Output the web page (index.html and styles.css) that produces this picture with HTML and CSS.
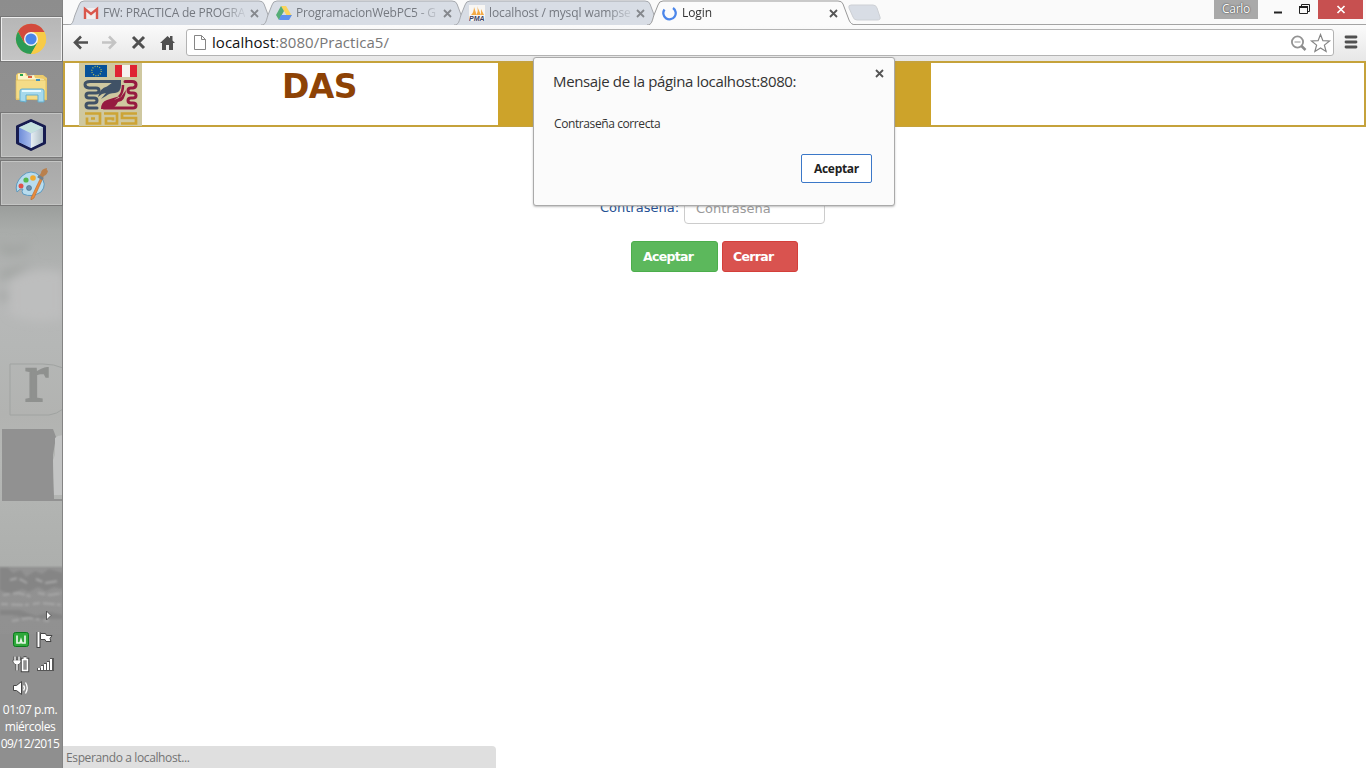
FILE: index.html
```html
<!DOCTYPE html>
<html lang="es">
<head>
<meta charset="utf-8">
<title>Login</title>
<link rel="stylesheet" href="styles.css">
</head>
<body>
<div class="desktop">
  <aside class="taskbar">
    <svg class="wallpaper" width="63" height="768" viewBox="0 0 63 768">
      <defs>
        <linearGradient id="sky" x1="0" y1="0" x2="0" y2="1">
          <stop offset="0" stop-color="#8d8d8d"/><stop offset=".18" stop-color="#929292"/><stop offset=".27" stop-color="#9c9f9d"/><stop offset=".3" stop-color="#a9acaa"/><stop offset=".39" stop-color="#b7b8b8"/><stop offset=".45" stop-color="#b5b7b6"/><stop offset=".54" stop-color="#b2b3b1"/><stop offset=".6" stop-color="#b5b7b5"/><stop offset=".736" stop-color="#adafad"/><stop offset=".74" stop-color="#929292"/><stop offset="1" stop-color="#8e8e8e"/>
        </linearGradient>
        <filter id="soft" x="-50%" y="-50%" width="200%" height="200%"><feGaussianBlur stdDeviation="5"/></filter>
        <filter id="slight"><feGaussianBlur stdDeviation=".8"/></filter>
      </defs>
      <rect width="63" height="768" fill="url(#sky)"/>
      <g filter="url(#soft)"><path d="M0 241q14 10 28 0v9q-16 9-28 2zM0 271q18-4 34-9l-18 13-16 6zM0 290q9 2 8 8l-8 6z" fill="#a2a5a3"/><path d="M10 280q25-15 53-7v45q-28 8-53-4z" fill="#bdbebe"/></g>
      <path d="M63 368q-9-4-20-4H10v51h39q8-1 14-6" fill="none" stroke="#a0a3a1"/>
      <text class="wall-letter" x="25" y="401">r</text>
      <path d="M2 429h51l3 8-3 18 1 44h9v2H2z" fill="#919191"/><path d="M55 438l3-2 5-1v60h-9l-1-35 2-5z" fill="#c3c4c4"/>
      <g filter="url(#slight)" fill="#858585"><path d="M0 568h8l5 5 8-3 5 7 9-6 7 3 7-5 14 4v16l-9-2-8 4-8-4-9 5-7-3-12 5-10-4z"/><path d="M0 610h20l16 6 14-4 13 3v4H32L12 615H0z"/></g>
      <g filter="url(#slight)" stroke="#a7a7a7" fill="none"><path stroke-width="2" stroke-dasharray="7 3 12 2 4 4" d="M10 580l8-2 9 5M36 579l9 4 13-2M3 595l16-2 13 4M38 593l12 2 13-2M1 604l24 1 15-2 23 2M12 621l17-3 20 3"/></g>
      <path d="M0 634h63v134H0z" fill="#8f8f8f"/>
      <path d="M62.500 0v768" stroke="#848484"/>
    </svg>
    <div class="task task-active">
      <svg width="32" height="32" viewBox="0 0 32 32"><circle cx="16" cy="16" r="15" fill="#f6c945"/><path d="M3 8.500A15 15 0 0 1 29.500 9H16L9.500 20z" fill="#d34a3d"/><path d="M3 8.500A15 15 0 0 0 16 31l6.500-11H9.500z" fill="#2c9b56"/><path d="M29.500 9A15 15 0 0 1 16 31l6.500-11.500L20 9z" fill="#f7cb48"/><circle cx="16" cy="16" r="7" fill="#f3f3f3"/><circle cx="16" cy="16" r="5.600" fill="#4a86ea"/></svg>
    </div>
    <div class="task task-plain">
      <svg width="34" height="34" viewBox="0 0 34 34"><path d="M2 5l2-2h8l2 3h5l1-1h9l4 3v22H2z" fill="#eccb6b"/><path d="M4 4l7-1 1 3 8-1 1 3 9 1v5H4z" fill="#fcf4c8"/><path d="M2 10h30v20l-30-1z" fill="#f4dc87" stroke="#d8b85d" stroke-width=".7"/><path d="M6 4h3v2H6z" fill="#26a44a"/><path d="M14 6h4v2h-4z" fill="#db6040"/><path d="M22 9h4v2h-4z" fill="#3d91bf"/><path d="M6 31V21q0-2 2-2h20q2 0 2 2v11h-6v-7H12v7z" fill="#a6d9ec" stroke="#64aecd"/><path d="M8 21h19" stroke="#e7faff" stroke-width="2"/></svg>
    </div>
    <div class="task">
      <svg width="32" height="34" viewBox="0 0 32 34"><defs><linearGradient id="cl"><stop stop-color="#6e8cd8"/><stop offset="1" stop-color="#a9bdec"/></linearGradient><linearGradient id="cr"><stop stop-color="#e6eef4"/><stop offset="1" stop-color="#adbcc4"/></linearGradient></defs><path d="M16 2.500L29.500 8.500v16.500L16 31.500 2.500 25V8.500z" fill="#a3b7e1" stroke="#171c50" stroke-width="3" stroke-linejoin="round"/><path d="M4 9.500l12-5.500 12 5.500-12 6z" fill="#c5e2df"/><path d="M4 9.500l12 6V30L4 24z" fill="url(#cl)"/><path d="M28 9.500l-12 6V30l12-6z" fill="url(#cr)"/></svg>
    </div>
    <div class="task">
      <svg width="34" height="34" viewBox="0 0 34 34"><path d="M8 10Q17 2 26 10q8 8 1 16-9 6-18 2-2-3 0-5-3-1-6 3-3-8 5-16z" fill="#b8dcee" stroke="#5f9abf"/><circle cx="7" cy="20" r="2.500" fill="#df5049"/><circle cx="12" cy="14" r="2.600" fill="#55b750"/><circle cx="19" cy="12" r="2.800" fill="#efaa31"/><circle cx="15" cy="22" r="2.500" fill="#708fa9" stroke="#38698c" stroke-width=".6"/><path d="M17 32l10-21 2 1-9 20-3 2z" fill="#e88c3d" stroke="#b9682d" stroke-width=".6"/><path d="M25 10l2-3q0-4 6-5-1 2 1 3-1 4-4 5l-2 3z" fill="#b9804d"/><path d="M24 10l5 3" stroke="#72818c" stroke-width="3"/></svg>
    </div>
    <div class="tray">
      <svg width="63" height="94" viewBox="0 0 63 94"><path d="M46.500 6v9l4.500-4.500z" fill="#fff" stroke="#555"/><rect x="13.500" y="27.500" width="15" height="14" rx="2" fill="#2fa83a" stroke="#087a1c"/><path d="M17 30.500v7.500h3l1-3 1 3h3v-7.500" fill="none" stroke="#e8f7e8" stroke-width="1.700"/><path d="M38.500 27v16" stroke="#444" stroke-width="4"/><path d="M38.500 27v15" stroke="#fff" stroke-width="2"/><path d="M40.500 28.500h5l1 2h5.500l-2 3 1 3h-5l-1-2h-4.500z" fill="#fff" stroke="#444"/><g fill="none"><path d="M15 51.500v4m4-4v4M17 58v7.500" stroke="#444" stroke-width="3"/><path d="M13 55h8v2l-2 2.500h-4L13 57z" fill="#fff" stroke="#444" stroke-width=".7"/><path d="M15 51.500v4m4-4v4M17 58v7.500" stroke="#fff" stroke-width="1.400"/><path d="M22.500 54.500h5v11h-5zM23.500 53h3" stroke="#444" stroke-width="3.500"/><path d="M22.500 54.500h5v11h-5zM23.500 53h3" fill="#8f8f8f" stroke="#fff" stroke-width="1.500"/></g><path d="M37 66h17V53h-4v3h-3v2h-3v2h-3v3h-4z" fill="#555"/><path d="M39 65v-2m3 2v-4m3 4v-6m3 6v-8m3 8V54" stroke="#fff" stroke-width="2"/><path d="M13.500 80.500h3l5-4v13l-5-4h-3z" fill="#fff" stroke="#444"/><path d="M23.500 80.500q2 2.500 0 5m2-8q3.500 5.500 0 11" fill="none" stroke="#fff" stroke-width="1.300"/></svg>
      <div class="clock"><span>01:07 p.m.</span><span>miércoles</span><span class="date">09/12/2015</span></div>
    </div>
  </aside>

  <div class="browser">
    <div class="tabstrip">
      <div class="tab">
        <svg class="tab-shape" width="209" height="25" viewBox="0 0 209 25"><path d="M0 25C5 25 5 21 7 15L11 5Q12 1 16 1H191Q195 1 196 4L202 20Q204 25 209 25" fill="#d8dde5" stroke="#a6a9ae"/></svg>
        <svg class="fav" width="16" height="16" viewBox="0 0 16 16"><path d="M1 3h14v11H1z" fill="#f0eeee"/><path d="M2 14V4l6 5 6-5v10" fill="none" stroke="#d9574c" stroke-width="2.400"/></svg>
        <span class="tab-title t1">FW: PRACTICA de PROGRA</span>
        <svg class="x" width="9" height="9" viewBox="0 0 9 9"><path d="M1 1l7 7m0-7L1 8"/></svg>
      </div>
      <div class="tab">
        <svg class="tab-shape" width="209" height="25" viewBox="0 0 209 25"><path d="M0 25C5 25 5 21 7 15L11 5Q12 1 16 1H191Q195 1 196 4L202 20Q204 25 209 25" fill="#d8dde5" stroke="#a6a9ae"/></svg>
        <svg class="fav" width="16" height="16" viewBox="0 0 16 16"><path d="M5 1h5l6 10h-5z" fill="#fbd45b"/><path d="M5 1l3 5-5 9-3-5z" fill="#55ad77"/><path d="M5 10h11l-3 5H3z" fill="#5e91ed"/></svg>
        <span class="tab-title t2">ProgramacionWebPC5 - G</span>
        <svg class="x" width="9" height="9" viewBox="0 0 9 9"><path d="M1 1l7 7m0-7L1 8"/></svg>
      </div>
      <div class="tab">
        <svg class="tab-shape" width="209" height="25" viewBox="0 0 209 25"><path d="M0 25C5 25 5 21 7 15L11 5Q12 1 16 1H191Q195 1 196 4L202 20Q204 25 209 25" fill="#d8dde5" stroke="#a6a9ae"/></svg>
        <svg class="fav" width="16" height="16" viewBox="0 0 16 16"><path d="M0 0h16v16H0z" fill="#f8f6f3"/><path d="M2 10Q5 7 5 2l2 6v2zM7 10q3-4 1-9l4 9zM12 10V4l3 6z" fill="#f4aa45"/><text class="pma" x="0" y="16">PMA</text></svg>
        <span class="tab-title t3">localhost / mysql wampse</span>
        <svg class="x" width="9" height="9" viewBox="0 0 9 9"><path d="M1 1l7 7m0-7L1 8"/></svg>
      </div>
      <div class="tab tab-current">
        <svg class="tab-shape" width="209" height="25" viewBox="0 0 209 25"><path d="M0 25C5 25 5 21 7 15L11 5Q12 1 16 1H191Q195 1 196 4L202 20Q204 25 209 25" fill="#fbfbfb" stroke="#999"/></svg>
        <svg class="fav" width="16" height="16" viewBox="0 0 16 16"><path d="M2.500 4.500A6.200 6.200 0 1 0 11 3" fill="none" stroke="#4b86ea" stroke-width="2.300"/></svg>
        <span class="tab-title t4">Login</span>
        <svg class="x" width="9" height="9" viewBox="0 0 9 9"><path d="M1 1l7 7m0-7L1 8"/></svg>
      </div>
      <svg class="newtab" width="34" height="18" viewBox="0 0 34 18"><path d="M3 1h22q3 0 4 3l3 9q1 3-3 3H9q-3 0-4-3L1 4q-1-3 2-3z" fill="#d8dde5" stroke="#cdd0d5"/></svg>
      <div class="window-controls">
        <span class="profile">Carlo</span>
        <svg width="105" height="19" viewBox="0 0 105 19"><path d="M16 12.500h8" stroke="#222" stroke-width="2"/><path d="M41.500 6.500h8v7h-8zM43.500 6V4.500h8v7H50" fill="none" stroke="#222"/><path d="M41 7h9" stroke="#222" stroke-width="2"/><path d="M60 0h45v19H60z" fill="#c75050"/><path d="M79.500 6l7 7m0-7l-7 7" stroke="#fff" stroke-width="1.700"/></svg>
      </div>
    </div>

    <div class="toolbar">
      <svg class="nav" width="116" height="36" viewBox="0 0 116 36"><g fill="none" stroke-width="2.600"><path d="M25 17.500H12m6-6l-6 6 6 6" stroke="#505050"/><path d="M39 17.500h13m-6-6l6 6-6 6" stroke="#c4c4c4"/><path d="M70 12l11 11m0-11L70 23" stroke="#505050" stroke-width="3"/></g><path d="M97 18l7.500-7 2.500 2.300V11h2.500v4.600L112 18h-2v7h-4v-5h-3v5h-4v-7z" fill="#505050"/></svg>
      <div class="omnibox">
        <svg width="12" height="15" viewBox="0 0 12 15"><path d="M.5.5h7l4 4v10H.5zM7.500.5v4h4" fill="#fff" stroke="#858585"/></svg>
        <span class="url">localhost<span>:8080/Practica5/</span></span>
        <svg class="omni-icons" width="42" height="20" viewBox="0 0 42 20"><circle cx="7.500" cy="9" r="5.600" fill="none" stroke="#939393" stroke-width="1.800"/><path d="M4.500 9h6" stroke="#939393"/><path d="M11.500 13l4 4" stroke="#8b8b8b" stroke-width="2.500"/><path d="M30.500 1.500l2.400 6.200 6.600.3-5.100 4.100 1.700 6.400-5.600-3.600-5.600 3.600 1.700-6.400-5.100-4.100 6.600-.3z" fill="#fff" stroke="#858585" stroke-width="1.200"/></svg>
      </div>
      <svg class="menu" width="14" height="14" viewBox="0 0 14 14"><path d="M2 2h10M2 7h10M2 12h10" stroke="#505050" stroke-width="2.800" stroke-linecap="round"/></svg>
    </div>

    <main class="page">
      <header class="banner">
        <div class="banner-cell brand">
          <svg width="63" height="63" viewBox="0 0 63 63"><path d="M0 0h63v63H0z" fill="#cfc8a0"/><path d="M6 2h22v12H6z" fill="#075299"/><circle cx="17.500" cy="8" r="4.700" fill="none" stroke="#b2bb5c" stroke-width="1.300" stroke-dasharray="1 1.450"/><path d="M36 2h22v12H36z" fill="#df2432"/><path d="M43 2h8v12h-8z" fill="#f6f2ee"/><g fill="none" stroke-width="3" stroke-linejoin="round" stroke-linecap="round"><path d="M40 18.500H11q-5 0-5 3t4 3.500h7q3 0 3 2.500T17 30h-7q-3 0-3 2.500t3 2.500h5q3 0 3 2.500T15 40h-5q-3 0-3 2.500t3 2.500h8" stroke="#405266"/><path d="M46 18.500h7q4 0 4 3t-3 3.500h-2q-3 0-3 2.500t3 2.500h2q3 0 3 2.500T54 35h-2q-3 0-3 2.500t3 2.500h2q3 0 3 2.500T54 45H25" stroke="#961a40"/></g><path d="M19 34q2-9 9-10.500 4-3.500 10-6.500h4v5q0 7-6 8-6 0-9 3l-5 3 5-6-4 1z" fill="#405266"/><path d="M22 46q0-7 6-9 6-2 13-4l-6 4 7-3 5-7q-1 12-8 12-3 6-8 7z" fill="#961a40"/><path d="M40 34q4-4 4-12" fill="none" stroke="#961a40" stroke-width="2.500"/><g fill="none" stroke="#cda435" stroke-width="2.700"><path d="M6 50.500h15v10H8v-6M12 55.500h4M25 50.500h13v10H27v-5h7v2M58 50.500H43v4.500h14v5.500H42"/></g></svg>
          <h1>DAS</h1>
        </div>
        <div class="banner-cell gold"></div>
        <div class="banner-cell"></div>
      </header>
      <form class="login">
        <div class="field"><label for="pass">Contraseña:</label><input id="pass" type="password" placeholder="Contraseña"></div>
        <div class="actions"><button type="button" class="btn ok">Aceptar</button><button type="button" class="btn close">Cerrar</button></div>
      </form>
    </main>

    <section class="dialog">
      <div class="dialog-head"><h2>Mensaje de la página localhost:8080:</h2><svg class="dx" width="9" height="9" viewBox="0 0 9 9"><path d="M1 1l7 7m0-7L1 8"/></svg></div>
      <p>Contraseña correcta</p>
      <button type="button" class="dialog-ok">Aceptar</button>
    </section>
    <div class="status"><span>Esperando a localhost...</span></div>
  </div>
</div>
</body>
</html>
```
FILE: styles.css
```css
* { box-sizing: border-box; }
body { margin: 0; overflow: hidden; font-family: "Open Sans", sans-serif; }
svg { display: block; flex-shrink: 0; }
.desktop { display: flex; width: 1366px; height: 768px; }

.taskbar { position: relative; width: 63px; flex-shrink: 0; display: flex; flex-direction: column; gap: 2px; padding-top: 16px; }
.wallpaper { position: absolute; left: 0; top: 0; }
.wall-letter { font: 70px "Liberation Serif", serif; fill: #8f918f; stroke: #8f918f; stroke-width: 2px; }
.task { position: relative; display: flex; align-items: center; justify-content: center; height: 46px; width: 63px; padding-right: 2px; border: 1px solid #777; box-shadow: inset 0 0 0 1px #c4c5c4; background: linear-gradient(#a9a9a9, #b3b4b3); }
.task-active { background: linear-gradient(#b6b6b6, #c5c5c5); box-shadow: inset 0 0 0 1px #eee; }
.task-plain { border-color: transparent; background: none; box-shadow: none; }
.tray { position: relative; margin-top: auto; height: 163px; }
.clock { display: flex; flex-direction: column; align-items: center; padding-right: 3px; margin-top: 2px; color: #fff; font-size: 12px; line-height: 17px; letter-spacing: -.4px; white-space: nowrap; }
.clock .date { letter-spacing: -.5px; }

.browser { position: relative; flex: 1; display: flex; flex-direction: column; min-width: 0; background: #fff; }
.tabstrip { display: flex; height: 25px; padding-left: 5px; background: #fafafa; border-bottom: 1px solid #a4a4a4; }
.tab { position: relative; display: flex; align-items: center; width: 209px; height: 25px; padding: 1px 18px 0 15px; margin-right: -16px; flex-shrink: 0; color: #757980; }
.tab-shape { position: absolute; left: 0; top: 0; }
.tab-current { color: #333; }
.fav { position: relative; }
.pma { font: italic bold 7px "Liberation Sans", sans-serif; fill: #3c3f63; }
.tab-title { position: relative; width: 142px; margin: 0 5px 0 4px; white-space: nowrap; font-size: 12px; line-height: 20px; mask-image: linear-gradient(90deg, #000 118px, transparent 146px); }
.t1 { letter-spacing: -.2px; }
.t2 { letter-spacing: -.2px; }
.t3 { letter-spacing: -.1px; }
.t4 { letter-spacing: -.1px; }
.x { position: relative; }
.x path, .dx path { stroke: #85888d; stroke-width: 1.800; }
.tab-current .x path, .dx path { stroke: #555; }
.newtab { margin: 4px 0 0 8px; }
.window-controls { display: flex; margin: 0 3px 0 auto; }
.profile { width: 44px; height: 19px; background: #a9a9a9; color: #fff; font-size: 12px; line-height: 18px; text-align: center; letter-spacing: -.3px; text-shadow: 0 0 1px #444, 0 0 2px #555; }

.toolbar { display: flex; align-items: center; height: 36px; background: linear-gradient(#fbfbfb, #e7e7e7); }
.nav { margin: -1px 7px 0 0; }
.omnibox { display: flex; align-items: center; width: 1148px; height: 27px; padding: 0 1px 0 7px; border: 1px solid #b3b3b3; border-radius: 3px; background: #fff; margin-top: -1px; }
.url { margin: -2px 0 0 6px; font-size: 15px; letter-spacing: .04px; line-height: 24px; color: #111; }
.url span { color: #777; }
.omni-icons { margin-left: auto; }
.menu { margin: -2px 0 0 10px; }

.page { flex: 1; font-family: Verdana, "DejaVu Sans", sans-serif; }
.banner { display: grid; grid-template-columns: repeat(3, 1fr); height: 66px; border: 2px solid #c5a23b; }
.brand { display: flex; padding-left: 14px; }
.brand h1 { margin: 5px 0 0 140px; font-size: 33px; line-height: 38px; letter-spacing: -.6px; color: #8d4205; }
.gold { background: #cda32a; }
.login { padding: 62px 0 0 537px; }
.field { display: flex; align-items: center; height: 35px; }
.field label { width: 84px; color: #234f91; font-size: 13px; white-space: nowrap; padding-top: 1px; }
.field input { width: 141px; height: 35px; padding: 4px 11px 0; border: 1px solid #ccc; border-radius: 4px; font: 13px "DejaVu Sans", sans-serif; }
.field input::placeholder { color: #999; }
.actions { display: flex; gap: 4px; padding: 17px 0 0 31px; }
.btn { height: 31px; padding: 0 0 0 11px; text-align: left; color: #fff; border: 1px solid #4cae4c; border-radius: 3px; font: bold 12.500px "DejaVu Sans", sans-serif; letter-spacing: -.7px; }
.ok { width: 87px; background: #5cb85c; }
.close { width: 76px; padding-left: 10px; background: #d9534f; border-color: #d43f3a; }

.dialog { position: absolute; left: 470px; top: 57px; width: 362px; height: 149px; padding: 10px 22px 0 20px; display: flex; flex-direction: column; background: #fbfbfb; border: 1px solid #aaa; border-radius: 3px; box-shadow: 0 1px 2px #8888; color: #333; }
.dialog-head { display: flex; justify-content: space-between; }
.dialog h2 { margin: 1px 0 1px -1px; font-weight: 400; font-size: 15px; line-height: 24px; letter-spacing: -.36px; white-space: nowrap; }
.dx { margin: 1px -12px 0 0; }
.dialog p { margin: 20px 0 0; font-size: 12px; line-height: 20px; letter-spacing: -.4px; }
.dialog-ok { align-self: flex-end; width: 71px; height: 29px; margin-top: 20px; padding: 0; background: #fff; border: 1px solid #3b78c8; border-radius: 2px; font: bold 12px "Open Sans", sans-serif; color: #222; letter-spacing: -.3px; }
.status { position: absolute; left: 0; bottom: 0; width: 433px; height: 22px; padding-left: 3px; background: #dfdfdf; border-top-right-radius: 4px; color: #737373; font-size: 12px; line-height: 23px; letter-spacing: -.38px; }
```
